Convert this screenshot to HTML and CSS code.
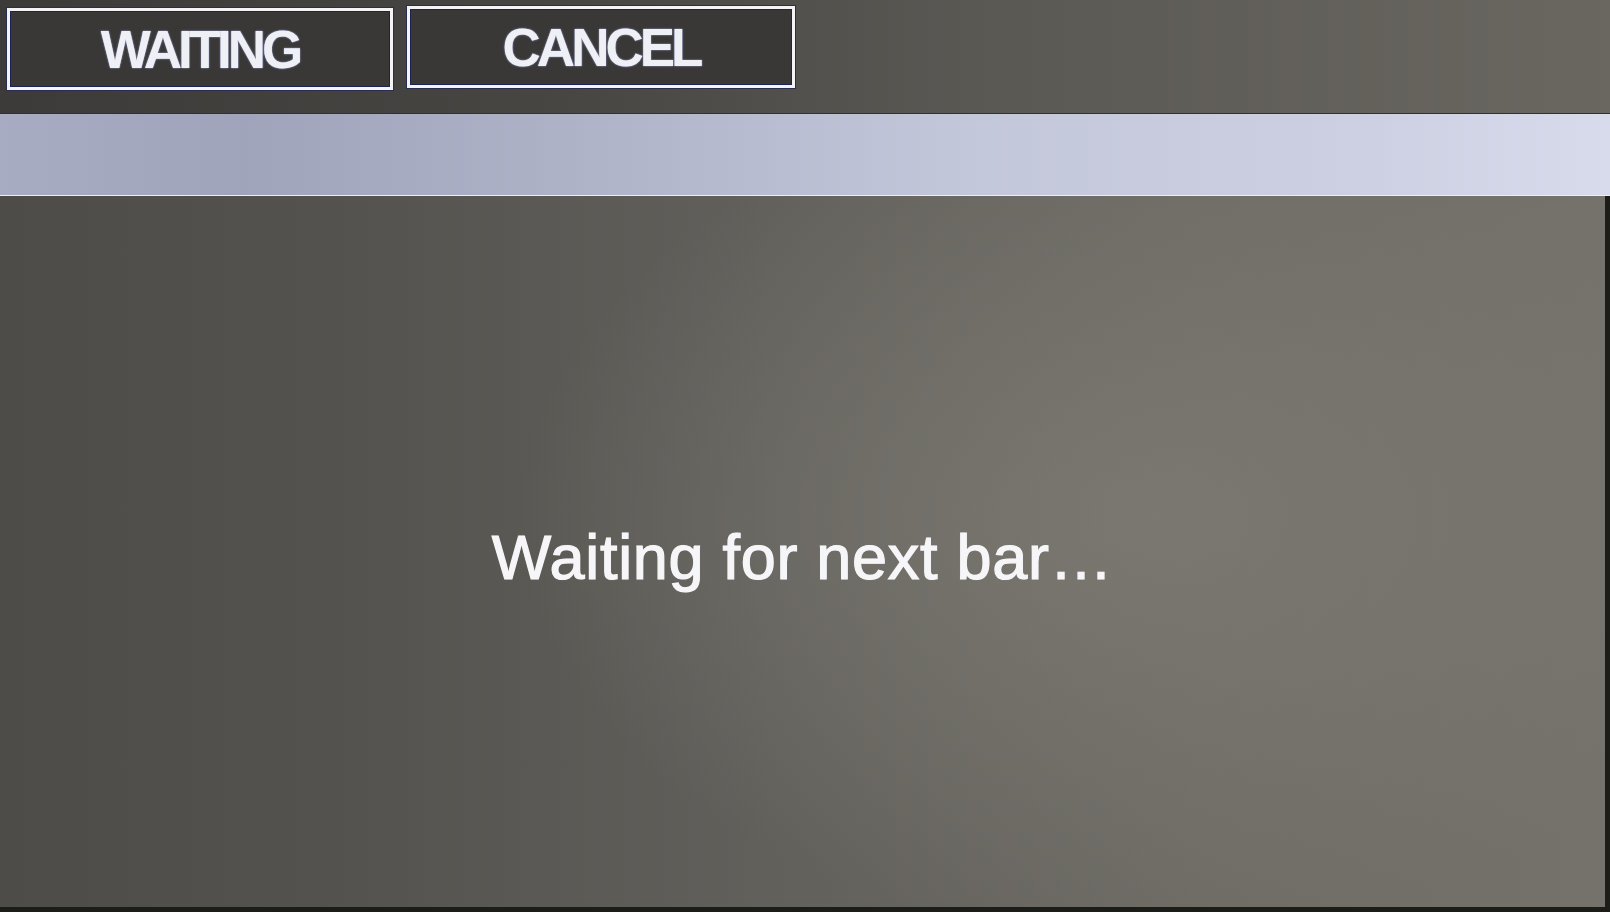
FILE: index.html
```html
<!DOCTYPE html>
<html lang="en">
<head>
<meta charset="utf-8">
<title>Waiting</title>
<link rel="stylesheet" href="styles.css">
</head>
<body>
<div class="screen">
  <header class="topbar">
    <button class="btn btn-waiting">WAITING</button>
    <button class="btn btn-cancel">CANCEL</button>
  </header>
  <div class="band"></div>
  <main class="main">
    <p class="message">Waiting for next bar…</p>
  </main>
</div>
</body>
</html>
```

FILE: styles.css
```css
html, body {
  margin: 0;
  padding: 0;
  width: 1610px;
  height: 912px;
  overflow: hidden;
  background: #1c1d19;
}

.screen {
  width: 1610px;
  height: 912px;
  display: flex;
  flex-direction: column;
}

.topbar {
  height: 113px;
  box-sizing: border-box;
  display: flex;
  align-items: flex-start;
  gap: 14px;
  padding: 7px 0 0 7px;
  background: linear-gradient(90deg, #3c3b39 0%, #484643 35%, #5a5853 60%, #6a6761 100%);
}

.btn {
  height: 82px;
  box-sizing: border-box;
  background: #393837;
  border: 3px solid #f4f4f6;
  outline: 1px solid #1d2350;
  outline-offset: -4px;
  color: #eef0f6;
  font-family: "Liberation Sans", Arial, sans-serif;
  font-weight: 700;
  font-size: 53px;
  letter-spacing: -4px;
  line-height: 1;
  padding: 0;
  display: flex;
  align-items: center;
  justify-content: center;
  text-shadow: 0 0 2px #9aa0c8, 0 0 1px #6a70a0;
  box-shadow: 0 0 0 1px #2a2c50;
}

.btn-waiting {
  width: 386px;
  margin-top: 1px;
}

.btn-cancel {
  width: 388px;
  margin-top: -1px;
}

.band {
  height: 81px;
  background: linear-gradient(90deg, #a8acc2 0%, #a0a4bb 15%, #aeb2c7 35%, #c3c7da 60%, #cdd0e2 85%, #d8dbec 100%);
  border-top: 1px solid #2e3040;
  border-bottom: 1px solid #eceef6;
}

.main {
  flex: 1;
  margin: 0 5px 5px 0;
  display: flex;
  align-items: center;
  justify-content: center;
  background:
    radial-gradient(ellipse 900px 600px at 1150px 320px, rgba(125,122,115,0.85) 0%, rgba(125,122,115,0) 70%),
    linear-gradient(90deg, #4d4c48 0%, #53524e 20%, #63615c 50%, #6f6c66 75%, #75726c 100%);
}

.message {
  margin: 10px 0 0 0;
  font-family: "Liberation Sans", Arial, sans-serif;
  font-size: 63px;
  color: #f6f6f8;
  letter-spacing: 0.7px;
  -webkit-text-stroke: 1.2px #f6f6f8;
  text-shadow: 0 0 1px #c8c8d8;
}
```
